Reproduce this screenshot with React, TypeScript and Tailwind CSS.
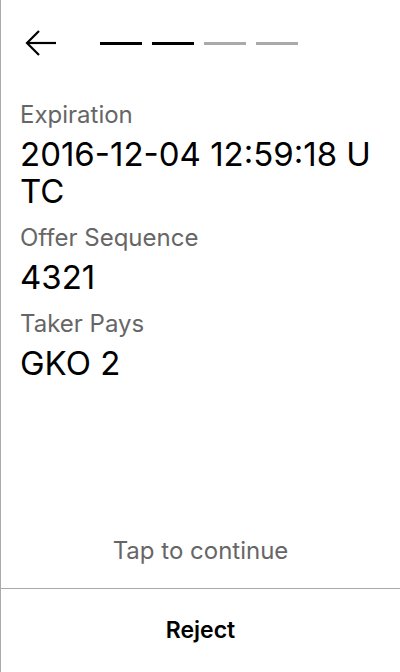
const fields = [
  { label: 'Expiration', value: '2016-12-04 12:59:18 UTC' },
  { label: 'Offer Sequence', value: '4321' },
  { label: 'Taker Pays', value: 'GKO 2' },
]

const steps = [true, true, false, false]

export default function App() {
  return (
    <div className="h-[672px] w-[400px] flex flex-col bg-white border-l border-[#aaaaaa] font-['Inter',sans-serif] text-black">
      <header className="h-[86px] shrink-0 flex items-center pl-[24px]">
        <button className="w-[32px] h-[28px] flex items-center justify-center">
          <svg width="32" height="28" viewBox="0 0 32 28" fill="none" stroke="black" strokeWidth="2.2">
            <path d="M31 14H2" />
            <path d="M14 2L2 14L14 26" />
          </svg>
        </button>
        <div className="flex gap-[10px] ml-[43px]">
          {steps.map((done, i) => (
            <div key={i} className={`w-[42px] h-[3px] ${done ? 'bg-black' : 'bg-[#aaaaaa]'}`} />
          ))}
        </div>
      </header>

      <main className="flex-1 pl-[19px] pr-[20px] pt-[13px]">
        {fields.map(f => (
          <div key={f.label} className="mb-[12px]">
            <p className="text-[24px] leading-[32px] text-[#666666]">{f.label}</p>
            <p className="mt-[5px] text-[33px] leading-[37px] break-all">{f.value}</p>
          </div>
        ))}
      </main>

      <button className="h-[74px] shrink-0 flex items-center justify-center text-[24px] text-[#666666]">
        Tap to continue
      </button>
      <button className="h-[84px] shrink-0 flex items-center justify-center border-t border-[#aaaaaa] text-[23px] font-semibold">
        Reject
      </button>
    </div>
  )
}
